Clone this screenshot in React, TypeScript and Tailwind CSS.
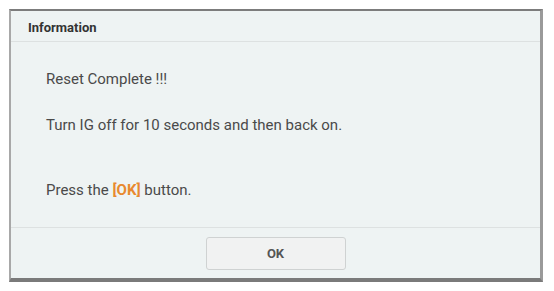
export default function App() {
  return (
    <div className="h-[291px] w-[554px] bg-white pl-[9px] pt-[9px] font-['Roboto','Liberation_Sans',sans-serif]">
      <div className="flex h-[273px] w-[534px] flex-col border-b-4 border-l-2 border-r-[3px] border-t-2 border-b-[#7a7a7a] border-l-[#a8a8a8] border-r-[#9a9a9a] border-t-[#7c7c7c] bg-[#eef3f3]">
        <div className="flex h-[31px] shrink-0 items-center border-b border-[#dde1e1] pl-[17px] pt-[3px] text-[13px] font-bold text-[#333]">
          Information
        </div>

        <div className="flex flex-1 flex-col pl-[35px] pt-[27px] text-[15px] leading-[20px] text-[#4a4a4a]">
          <p>Reset Complete !!!</p>
          <p className="mt-[26px]">Turn IG off for 10 seconds and then back on.</p>
          <p className="mt-[45px]">
            Press the <span className="font-bold text-[#e8892e]">[OK]</span> button.
          </p>
        </div>

        <div className="flex h-[51px] shrink-0 items-start justify-center border-t border-[#dde1e1] pt-[9px]">
          <button className="flex h-[33px] w-[140px] items-center justify-center rounded-[3px] border border-[#cfd2d2] bg-[#f1f2f2] pt-[1px] text-[13px] font-bold text-[#555]">
            OK
          </button>
        </div>
      </div>
    </div>
  )
}
